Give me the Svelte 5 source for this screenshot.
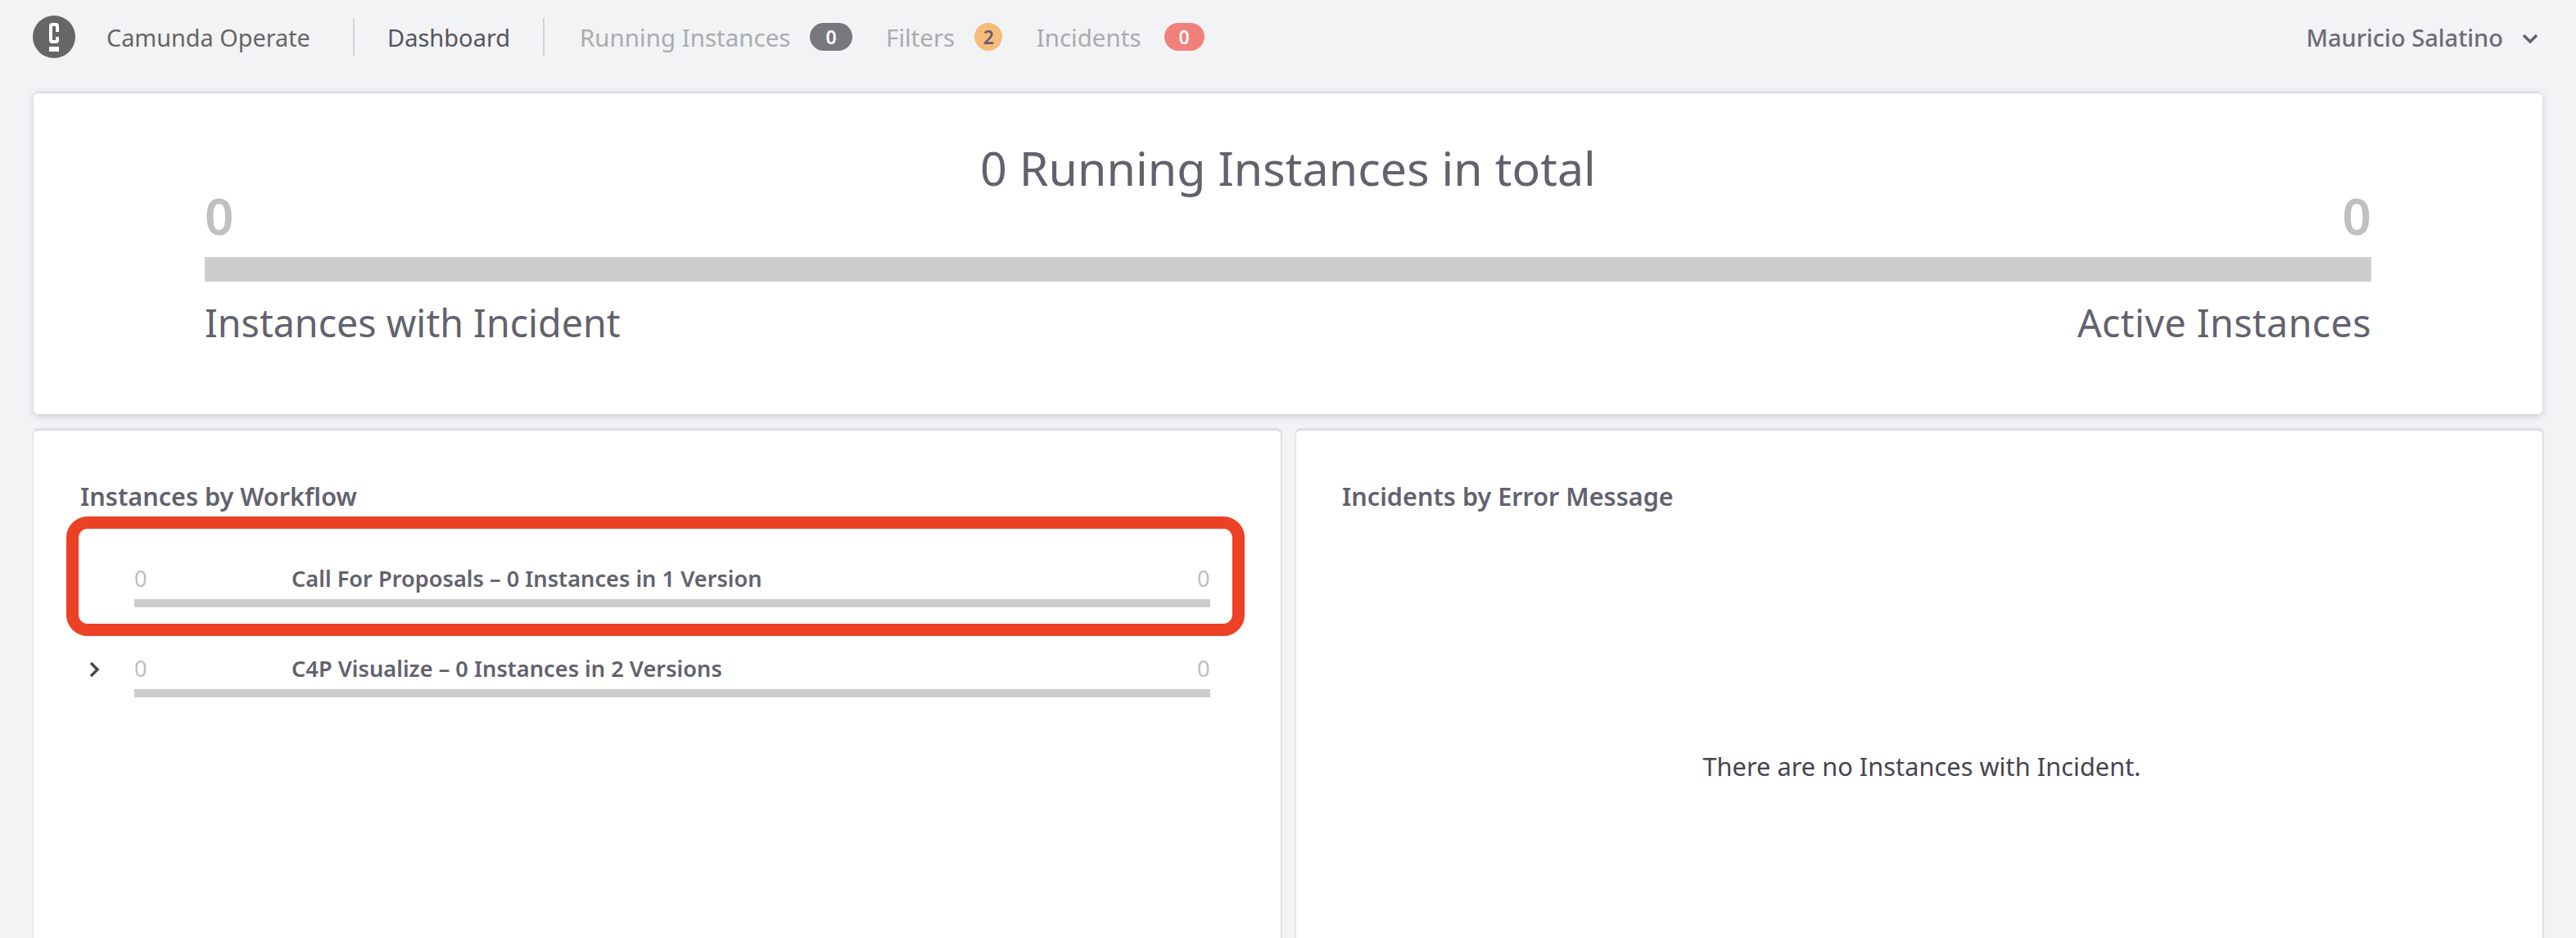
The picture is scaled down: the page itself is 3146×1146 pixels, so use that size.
<script>
  const navItems = [
    { label: 'Running Instances', count: 0, kind: 'dark' },
    { label: 'Filters', count: 2, kind: 'orange' },
    { label: 'Incidents', count: 0, kind: 'red' }
  ];
  const rows = [
    { title: 'Call For Proposals – 0 Instances in 1 Version', expandable: false },
    { title: 'C4P Visualize – 0 Instances in 2 Versions', expandable: true }
  ];
</script>

<div class="page">
  <header class="header">
    <svg class="logo" viewBox="0 0 52 52" aria-hidden="true">
      <circle cx="26" cy="26" r="26" fill="#666666" />
      <path d="M30 20V13a2 2 0 0 0-2-2h-4a2 2 0 0 0-2 2v17a2 2 0 0 0 2 2h4a2 2 0 0 0 2-2v-4" fill="none" stroke="#fff" stroke-width="4" />
      <rect x="20" y="38" width="12" height="6" fill="#fff" />
    </svg>
    <span class="brand">Camunda Operate</span>
    <span class="sep"></span>
    <span class="dash">Dashboard</span>
    <span class="sep"></span>
    <nav class="nav">
      {#each navItems as item}
        <span class="nav-item">
          <span class="nav-label">{item.label}</span>
          <span class="badge {item.kind}">{item.count}</span>
        </span>
      {/each}
    </nav>
    <span class="user">Mauricio Salatino</span>
    <svg class="caret" viewBox="0 0 20 12" aria-hidden="true">
      <path d="M2 2l8 8 8-8" fill="none" stroke="#62626e" stroke-width="3.4" />
    </svg>
  </header>

  <main class="main">
    <section class="card top">
      <h1 class="total">0 Running Instances in total</h1>
      <div class="nums"><span>0</span><span>0</span></div>
      <div class="bar big"></div>
      <div class="labels"><span>Instances with Incident</span><span class="active">Active Instances</span></div>
    </section>

    <div class="columns">
      <section class="card panel left">
        <h2 class="panel-title">Instances by Workflow</h2>
        <ul class="rows">
          {#each rows as row}
            <li class="row">
              <span class="toggle">
                {#if row.expandable}
                  <svg viewBox="0 0 14 20" aria-hidden="true"><path d="M3 2l8 8-8 8" fill="none" stroke="#45454f" stroke-width="3.4" /></svg>
                {/if}
              </span>
              <div class="row-body">
                <div class="row-text">
                  <span class="n">0</span>
                  <span class="row-title">{row.title}</span>
                  <span class="n">0</span>
                </div>
                <div class="bar small"></div>
              </div>
            </li>
          {/each}
        </ul>
        <div class="highlight"></div>
      </section>

      <section class="card panel">
        <h2 class="panel-title">Incidents by Error Message</h2>
        <p class="empty">There are no Instances with Incident.</p>
      </section>
    </div>
  </main>
</div>

<style>
  :global(body) {
    margin: 0;
    background: #f2f3f5;
  }
  .page {
    width: 3146px;
    height: 1146px;
    overflow: hidden;
    background: #f2f3f5;
    font-family: "Noto Sans", sans-serif;
    color: #62626e;
  }
  .header {
    height: 112px;
    display: flex;
    align-items: center;
    padding: 0 46px 22px 40px;
    box-sizing: border-box;
    font-size: 29px;
  }
  .logo {
    width: 52px;
    height: 52px;
    flex: none;
  }
  .brand {
    margin-left: 38px;
    width: 301px;
    font-size: 28.8px;
    color: #666;
  }
  .sep {
    width: 2px;
    height: 46px;
    background: #d0d2d6;
    flex: none;
  }
  .dash {
    margin-left: 40px;
    width: 190px;
    color: #55555f;
  }
  .nav {
    display: flex;
    margin-left: 43px;
    flex: 1;
    gap: 41.5px;
  }
  .nav-item {
    display: flex;
    align-items: center;
    gap: 24px;
  }
  .nav-label {
    color: #aaabb0;
    font-size: 29.5px;
  }
  .badge {
    height: 34px;
    min-width: 34px;
    padding: 0 19px;
    box-sizing: border-box;
    border-radius: 17px;
    display: flex;
    align-items: center;
    justify-content: center;
    font-size: 23px;
    font-weight: 600;
    color: #fff;
  }
  .badge.dark { background: #77787c; }
  .badge.orange { background: #f5bc7a; color: #62626e; padding: 0 9px; }
  .badge.red { background: #f1807a; padding: 0 18px; margin-left: 4px; }
  .user {
    font-weight: 500;
    color: #6c6c76;
  }
  .caret {
    width: 20px;
    height: 12px;
    margin-left: 23px;
    margin-top: 4px;
    flex: none;
  }
  .main {
    padding: 0 41px;
  }
  .card {
    background: #fff;
    border-top: 2px solid #d9dce2;
    border-radius: 6px;
    box-sizing: border-box;
  }
  .top {
    height: 394px;
    padding: 0 209px;
    box-shadow: 0 3px 8px rgba(90, 95, 110, 0.25);
  }
  .total {
    margin: 0;
    padding-top: 52px;
    height: 48px;
    line-height: 78px;
    text-align: center;
    font-size: 57.4px;
    font-weight: 400;
    color: #62626e;
  }
  .nums {
    display: flex;
    justify-content: space-between;
    margin-top: 12px;
    height: 88px;
    line-height: 74px;
    font-size: 62px;
    font-weight: 600;
    color: #bfc0c2;
  }
  .bar {
    background: #cdcdcf;
  }
  .bar.big {
    height: 30px;
  }
  .labels {
    display: flex;
    justify-content: space-between;
    margin-top: 20px;
    font-size: 46.6px;
    line-height: 60px;
    color: #62626e;
  }
  .active {
    letter-spacing: 0.4px;
  }
  .columns {
    display: grid;
    grid-template-columns: 1523px 1522px;
    gap: 19px;
    margin-top: 18px;
  }
  .panel {
    position: relative;
    height: 700px;
    padding: 0 56px;
    box-shadow: 1px 0 2px rgba(90, 95, 110, 0.25), -1px 0 2px rgba(90, 95, 110, 0.12);
  }
  .panel.left {
    padding-left: 57px;
  }
  .panel-title {
    margin: 0;
    padding-top: 60px;
    line-height: 40px;
    font-size: 30.6px;
    font-weight: 600;
    color: #62626e;
  }
  .rows {
    list-style: none;
    margin: 0;
    padding: 66px 0 0;
    display: flex;
    flex-direction: column;
    gap: 70px;
  }
  .row {
    display: flex;
    height: 40px;
    margin-left: 10px;
  }
  .toggle {
    width: 56px;
    flex: none;
  }
  .toggle svg {
    display: block;
    width: 14px;
    height: 20px;
    margin-top: 6px;
  }
  .row-body {
    width: 1314px;
  }
  .row-text {
    display: flex;
    height: 30px;
    line-height: 30px;
    font-size: 27.2px;
  }
  .n {
    color: #bdbec0;
    width: 16px;
  }
  .row-title {
    margin-left: 176px;
    flex: 1;
    font-weight: 600;
    color: #62626e;
  }
  .bar.small {
    height: 10px;
    margin-top: 10px;
  }
  .highlight {
    position: absolute;
    left: 40px;
    top: 105px;
    width: 1439px;
    height: 146px;
    box-sizing: border-box;
    border: 15px solid #ec4125;
    border-radius: 26px;
  }
  .empty {
    margin: 0;
    padding-top: 290px;
    padding-left: 6px;
    text-align: center;
    font-size: 30.8px;
    line-height: 40px;
    color: #45454f;
  }
</style>
